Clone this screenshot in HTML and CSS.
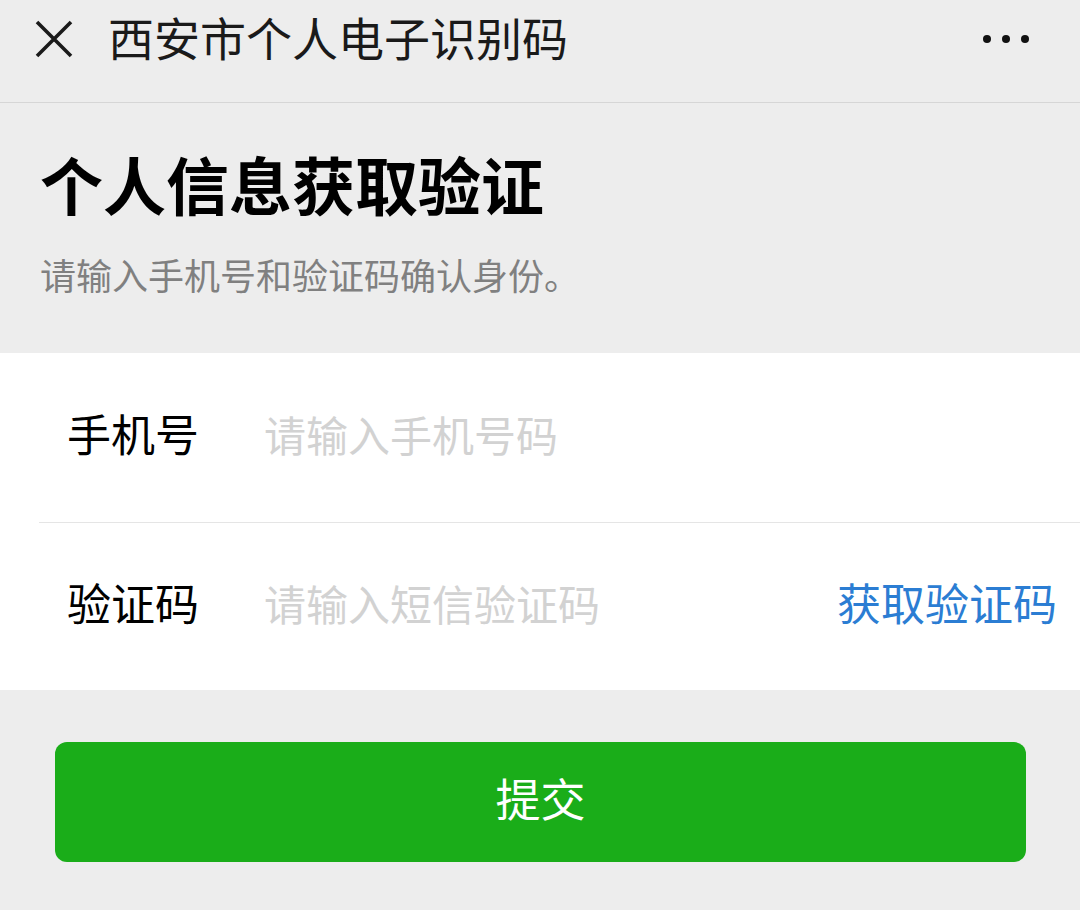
FILE: index.html
```html
<!DOCTYPE html>
<html lang="zh-CN">
<head>
<meta charset="utf-8">
<title>西安市个人电子识别码</title>
<link rel="stylesheet" href="styles.css">
</head>
<body>
<header class="topbar">
  <div class="topbar-row">
    <button class="icon-btn close" aria-label="关闭">
      <svg width="38" height="38" viewBox="0 0 38 38"><path d="M2 2 L36 36 M36 2 L2 36" stroke="#1a1a1a" stroke-width="3.6" fill="none"/></svg>
    </button>
    <h1 class="topbar-title">西安市个人电子识别码</h1>
    <button class="icon-btn more" aria-label="更多">
      <span class="dot"></span><span class="dot"></span><span class="dot"></span>
    </button>
  </div>
</header>
<section class="intro">
  <h2 class="intro-title">个人信息获取验证</h2>
  <p class="intro-sub">请输入手机号和验证码确认身份。</p>
</section>
<form class="form">
  <div class="row">
    <label class="label" for="phone">手机号</label>
    <input class="field" id="phone" type="tel" placeholder="请输入手机号码">
  </div>
  <div class="row row-sep">
    <label class="label" for="code">验证码</label>
    <input class="field" id="code" type="text" placeholder="请输入短信验证码">
    <span class="get-code">获取验证码</span>
  </div>
</form>
<div class="actions">
  <button class="submit" type="button">提交</button>
</div>
</body>
</html>
```
FILE: styles.css
```css
* { box-sizing: border-box; }
html, body {
  margin: 0;
  padding: 0;
  background: #ededed;
  font-family: "Noto Sans CJK SC", "Noto Sans", sans-serif;
  color: #111;
}
.topbar {
  height: 103px;
  padding-bottom: 22px;
  border-bottom: 1px solid #d6d6d6;
}
.topbar-row {
  height: 80px;
  display: flex;
  align-items: center;
  padding-left: 35px;
  padding-right: 51px;
}
.icon-btn {
  background: none;
  border: none;
  padding: 0;
  margin: 0;
  display: flex;
  align-items: center;
  cursor: pointer;
}
.close { width: 38px; height: 38px; margin-top: -3px; }
.topbar-title {
  margin: -8px 0 0 35px;
  flex: 1;
  font-size: 46px;
  font-weight: 400;
  line-height: 46px;
  color: #1a1a1a;
}
.more { gap: 11px; margin-top: -2px; }
.dot {
  width: 8px;
  height: 8px;
  border-radius: 50%;
  background: #111;
}
.intro {
  padding: 48px 40px 61px 40px;
}
.intro-title {
  margin: 0;
  font-size: 63px;
  line-height: 63px;
  font-weight: 700;
  color: #000;
}
.intro-sub {
  margin: 42px 0 0 0;
  font-size: 36px;
  line-height: 36px;
  color: #808080;
}
.form {
  background: #fff;
  padding-left: 39px;
  display: flex;
  flex-direction: column;
}
.row {
  height: 169px;
  display: flex;
  align-items: center;
  padding-left: 28px;
  padding-right: 23px;
  padding-bottom: 9px;
}
.row-sep {
  height: 168px;
  border-top: 1px solid #e5e5e5;
}
.label {
  width: 197px;
  flex-shrink: 0;
  font-size: 44px;
  line-height: 44px;
  color: #000;
}
.field {
  flex: 1;
  min-width: 0;
  border: none;
  outline: none;
  background: transparent;
  padding: 0;
  font-family: inherit;
  font-size: 42px;
  line-height: 42px;
  height: 60px;
  color: #111;
}
.field::placeholder { color: #d2d2d2; }
.get-code {
  font-size: 44px;
  line-height: 44px;
  color: #2b7dd3;
  white-space: nowrap;
}
.actions {
  padding: 52px 54px 0 55px;
}
.submit {
  width: 100%;
  height: 120px;
  padding: 0 0 9px 0;
  border: none;
  border-radius: 12px;
  background: #1aad19;
  color: #fff;
  font-family: inherit;
  font-size: 45px;
  line-height: 45px;
  cursor: pointer;
}
```
